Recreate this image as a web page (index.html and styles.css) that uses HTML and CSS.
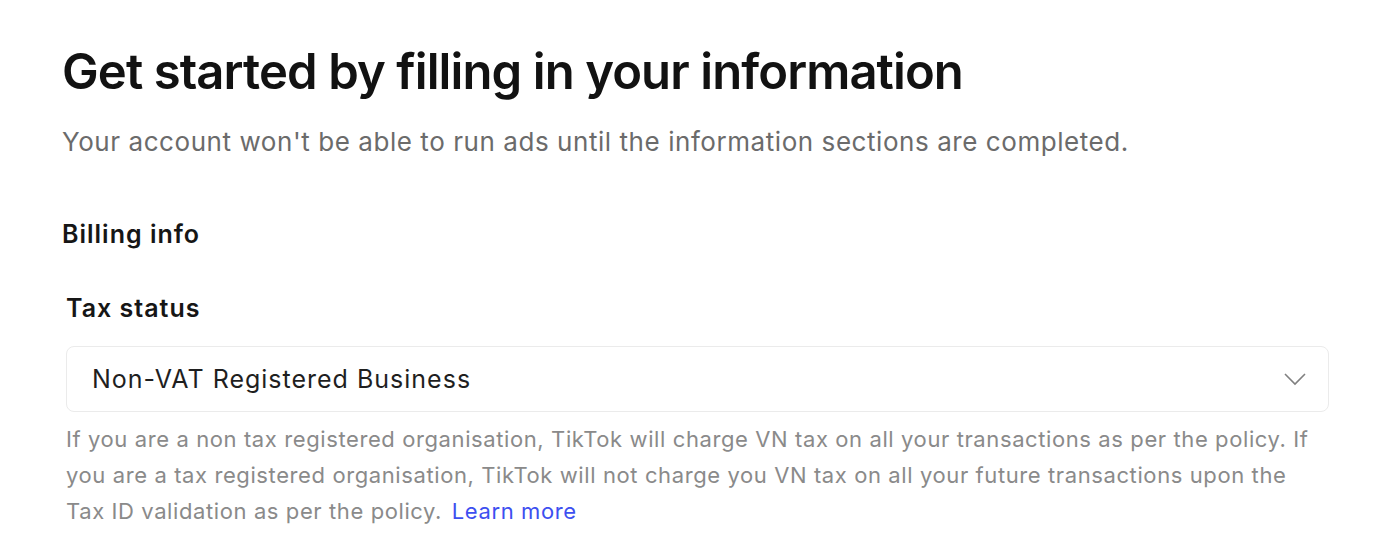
FILE: index.html
```html
<!DOCTYPE html>
<html lang="en">
<head>
  <meta charset="UTF-8" />
  <title>Billing info</title>
  <link rel="stylesheet" href="styles.css">
</head>
<body>
  <div class="page">
    <h1 class="title">Get started by filling in your information</h1>
    <p class="subtitle">Your account won't be able to run ads until the information sections are completed.</p>

    <h2 class="section">Billing info</h2>

    <div class="field">
      <label class="label" for="taxStatus">Tax status</label>
      <div class="select" id="taxStatus">
        <span>Non-VAT Registered Business</span>
        <svg class="chevron" width="24" height="14" viewBox="0 0 24 14" fill="none">
          <path d="M2 2l10 10L22 2" stroke="#808080" stroke-width="1.6"/>
        </svg>
      </div>
      <p class="help">If you are a non tax registered organisation, TikTok will charge VN tax on all your transactions as per the policy. If you are a tax registered organisation, TikTok will not charge you VN tax on all your future transactions upon the Tax ID validation as per the policy. <a href="#">Learn more</a></p>
    </div>
  </div>
</body>
</html>
```

FILE: styles.css
```css
body {
  margin: 0;
  font-family: Inter, "Noto Sans", sans-serif;
  background: #fff;
  color: #161823;
}
.page {
  padding: 42px 62px;
}
.title {
  margin: 0;
  font-size: 49px;
  font-weight: 600;
  line-height: 60px;
  letter-spacing: -0.9px;
  color: #121212;
}
.subtitle {
  margin: 22px 0 0;
  font-size: 26px;
  line-height: 36px;
  letter-spacing: 0.56px;
  color: #6b6b6b;
}
.section {
  margin: 56px 0 0;
  font-size: 25px;
  font-weight: 600;
  line-height: 36px;
  letter-spacing: 1px;
  color: #161616;
}
.field {
  margin-left: 4px;
  margin-top: 38px;
  width: 1263px;
}
.label {
  display: block;
  font-size: 25px;
  font-weight: 600;
  line-height: 36px;
  letter-spacing: 1px;
  color: #161616;
}
.select {
  margin-top: 20px;
  height: 64px;
  border: 1px solid #ebebeb;
  border-radius: 8px;
  display: flex;
  align-items: center;
  justify-content: space-between;
  padding: 0 21px 0 25px;
  font-size: 25px;
  letter-spacing: 1px;
  color: #1f1f1f;
}
.help {
  margin: 9px 0 0;
  font-size: 22px;
  line-height: 36px;
  letter-spacing: 0.6px;
  color: #8a8a8a;
}
.help a {
  color: #3d4ff0;
  text-decoration: none;
  margin-left: 3px;
}
```
